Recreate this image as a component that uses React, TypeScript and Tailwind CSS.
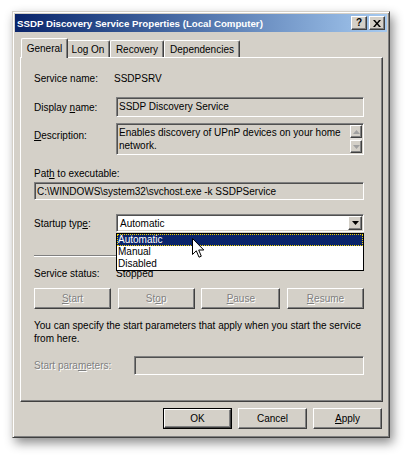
import React from 'react';

const raised =
  'border border-t-white border-l-white border-r-[#404040] border-b-[#404040] shadow-[inset_-1px_-1px_#808080]';
const sunken =
  'border border-t-[#808080] border-l-[#808080] border-r-white border-b-white shadow-[inset_1px_1px_#505050,inset_-1px_-1px_#d4d0c8]';
const disabledText = 'text-[#808080] [text-shadow:1px_1px_0_#fff]';

function PushButton({
  children,
  disabled,
  width,
}: {
  children: React.ReactNode;
  disabled?: boolean;
  width: string;
}) {
  return (
    <div className={`${width} h-[21px] flex items-center justify-center bg-[#d4d0c8] ${raised} ${disabled ? disabledText : ''}`}>
      {children}
    </div>
  );
}

function Tab({ label, selected, width }: { label: string; selected?: boolean; width: string }) {
  return (
    <div
      className={`${width} flex items-center justify-center rounded-t-[2px] bg-[#d4d0c8] border border-b-0 border-t-white border-l-white border-r-[#404040] shadow-[inset_-1px_0_#808080] ${
        selected ? 'h-[20px] -mx-[2px] -mb-[1px] z-10 relative' : 'h-[17px] mt-[2px]'
      }`}
    >
      {label}
    </div>
  );
}

function ScrollArrow({ up, color }: { up?: boolean; color: string }) {
  return (
    <svg width="7" height="4" viewBox="0 0 7 4">
      <path d={up ? 'M3.5 0 L7 4 L0 4 Z' : 'M0 0 L7 0 L3.5 4 Z'} fill={color} />
    </svg>
  );
}

export default function App() {
  return (
    <div className="w-[410px] h-[458px] bg-white pt-[11px] pl-[12px] relative font-['Liberation_Sans',Arial,sans-serif] text-[10px] leading-[13px] text-black">
      <div className="w-[378px] h-[427px] bg-[#d4d0c8] border border-t-[#d4d0c8] border-l-[#d4d0c8] border-r-[#404040] border-b-[#404040] shadow-[inset_1px_1px_#fff,inset_-1px_-1px_#808080,3px_5px_10px_rgba(0,0,0,0.45)] p-[2px] flex flex-col">
        {/* Title bar */}
        <div className="h-[18px] flex items-center bg-gradient-to-r from-[#0a246a] to-[#a6caf0] pl-[2px] pr-[2px]">
          <span className="font-bold text-white text-[9.7px] flex-1">SSDP Discovery Service Properties (Local Computer)</span>
          <div className={`w-[16px] h-[14px] bg-[#d4d0c8] ${raised} flex items-center justify-center font-bold text-[10px] leading-none`}>?</div>
          <div className={`w-[16px] h-[14px] ml-[2px] bg-[#d4d0c8] ${raised} flex items-center justify-center`}>
            <svg width="8" height="7" viewBox="0 0 8 7">
              <path d="M0 0 L2 0 L4 2.5 L6 0 L8 0 L5 3.5 L8 7 L6 7 L4 4.5 L2 7 L0 7 L3 3.5 Z" fill="#000" />
            </svg>
          </div>
        </div>

        {/* Tabs */}
        <div className="mt-[6px] ml-[8px] flex items-start h-[19px]">
          <Tab label="General" selected width="w-[47px]" />
          <Tab label="Log On" width="w-[44px]" />
          <Tab label="Recovery" width="w-[54px]" />
          <Tab label="Dependencies" width="w-[76px]" />
        </div>

        {/* Tab panel */}
        <div className={`ml-[5px] w-[363px] h-[345px] bg-[#d4d0c8] ${raised} pl-[13px] pr-[18px] pt-[13px] flex flex-col`}>
          <div className="h-[14px] flex items-center">
            <span className="w-[80px]">Service name:</span>
            <span>SSDPSRV</span>
          </div>

          <div className="mt-[12px] h-[20px] flex items-center">
            <span className="w-[80px]">
              Display <u>n</u>ame:
            </span>
            <div className={`ml-[2px] flex-1 h-[20px] ${sunken} px-[2px] pt-[2px]`}>SSDP Discovery Service</div>
          </div>

          <div className="mt-[6px] h-[32px] flex items-start">
            <span className="w-[80px] mt-[6px]">
              <u>D</u>escription:
            </span>
            <div className={`ml-[2px] flex-1 h-[32px] ${sunken} p-[1px] flex`}>
              <div className="flex-1 pl-[1px] pt-[1px]">
                Enables discovery of UPnP devices on your home
                <br />
                network.
              </div>
              <div className="w-[12px] flex flex-col bg-[#e6e3de]">
                <div className={`h-[13px] bg-[#d4d0c8] ${raised} flex items-center justify-center`}>
                  <ScrollArrow up color="#a0a0a0" />
                </div>
                <div className="flex-1" />
                <div className={`h-[13px] bg-[#d4d0c8] ${raised} flex items-center justify-center`}>
                  <ScrollArrow color="#a0a0a0" />
                </div>
              </div>
            </div>
          </div>

          <div className="mt-[12px] h-[14px] leading-[14px]">
            Pat<u>h</u> to executable:
          </div>
          <div className={`mt-[1px] h-[18px] ${sunken} flex items-center px-[2px]`}>
            C:\WINDOWS\system32\svchost.exe -k SSDPService
          </div>

          <div className="mt-[14px] h-[18px] flex items-center relative z-20">
            <span className="w-[80px]">
              Startup typ<u>e</u>:
            </span>
            <div className="ml-[2px] flex-1 relative">
              <div className={`h-[18px] bg-white ${sunken} flex items-center p-[1px]`}>
                <span className="flex-1 pl-[2px]">Automatic</span>
                <div className={`w-[14px] h-[14px] bg-[#d4d0c8] ${raised} flex items-center justify-center`}>
                  <ScrollArrow color="#000" />
                </div>
              </div>
              {/* open dropdown list */}
              <div className="absolute left-0 right-0 top-[19px] bg-white border border-black flex flex-col">
                <div className="h-[12px] leading-[12px] bg-[#0a246a] text-white pl-[1px] outline-1 outline-dotted outline-[#f0d000] -outline-offset-1">
                  Automatic
                </div>
                <div className="h-[12px] leading-[12px] pl-[1px]">Manual</div>
                <div className="h-[12px] leading-[12px] pl-[1px]">Disabled</div>
              </div>
            </div>
          </div>

          <div className="mt-[23px] h-[2px] border-t border-t-[#808080] border-b border-b-white" />

          <div className="mt-[9px] h-[14px] flex items-center">
            <span className="w-[82px]">Service status:</span>
            <span>Stopped</span>
          </div>

          <div className="mt-[8px] flex justify-between">
            <PushButton disabled width="w-[77px]">
              <span>
                <u>S</u>tart
              </span>
            </PushButton>
            <PushButton disabled width="w-[77px]">
              <span>
                St<u>o</u>p
              </span>
            </PushButton>
            <PushButton disabled width="w-[79px]">
              <span>
                <u>P</u>ause
              </span>
            </PushButton>
            <PushButton disabled width="w-[77px]">
              <span>
                <u>R</u>esume
              </span>
            </PushButton>
          </div>

          <p className="mt-[10px] leading-[13px]">
            You can specify the start parameters that apply when you start the service
            <br />
            from here.
          </p>

          <div className="mt-[11px] h-[19px] flex items-center">
            <span className={`w-[100px] ${disabledText}`}>
              Start para<u>m</u>eters:
            </span>
            <div className={`flex-1 h-[19px] ${sunken}`} />
          </div>
        </div>

        {/* Dialog buttons */}
        <div className="mt-[6px] flex justify-end gap-[6px] pr-[5px]">
          <div className="w-[69px] h-[21px] border border-black flex">
            <div className={`flex-1 bg-[#d4d0c8] ${raised} flex items-center justify-center`}>OK</div>
          </div>
          <PushButton width="w-[69px]">Cancel</PushButton>
          <PushButton width="w-[69px]">
            <span>
              <u>A</u>pply
            </span>
          </PushButton>
        </div>
      </div>

      {/* mouse pointer */}
      <svg className="absolute left-[192px] top-[238px] z-30" width="13" height="21" viewBox="0 0 13 21">
        <path
          d="M0.5 0.5 L0.5 16.5 L4.3 12.8 L7 19.2 L9.3 18.2 L6.7 12 L11.8 12 Z"
          fill="#fff"
          stroke="#000"
          strokeWidth="1"
          strokeLinejoin="miter"
        />
      </svg>
    </div>
  );
}
